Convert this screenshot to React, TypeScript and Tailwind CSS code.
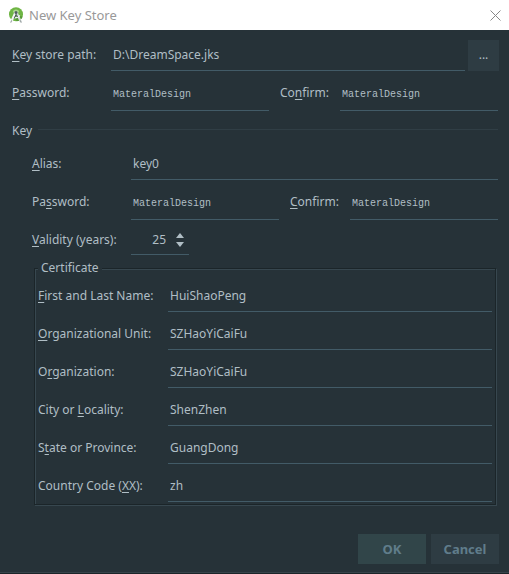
import type { InputHTMLAttributes, ReactNode } from "react";

const fieldBase =
  "h-8 min-w-0 flex-1 rounded-none border-0 border-b border-[#425b67] bg-transparent p-0 pl-[2px] text-[#b0bec5] outline-none";

function Mnemonic({ children }: { children: ReactNode }) {
  return <span className="underline decoration-1 underline-offset-2">{children}</span>;
}

function TextField(props: InputHTMLAttributes<HTMLInputElement>) {
  return <input type="text" className={fieldBase} {...props} />;
}

function SecretField(props: InputHTMLAttributes<HTMLInputElement>) {
  return (
    <input
      type="text"
      className="h-9 min-w-0 flex-1 rounded-none border-0 border-b border-[#425b67] bg-transparent p-0 pt-[3px] pl-[2px] font-['Liberation_Mono',monospace] text-[10px] text-[#b0bec5] outline-none"
      {...props}
    />
  );
}

function Label({ id, className, children }: { id: string; className: string; children: ReactNode }) {
  return (
    <label htmlFor={id} className={`shrink-0 whitespace-nowrap ${className}`}>
      {children}
    </label>
  );
}

const certificate = [
  { id: "name", before: "", key: "F", after: "irst and Last Name:", value: "HuiShaoPeng" },
  { id: "unit", before: "", key: "O", after: "rganizational Unit:", value: "SZHaoYiCaiFu" },
  { id: "org", before: "O", key: "r", after: "ganization:", value: "SZHaoYiCaiFu" },
  { id: "city", before: "City or ", key: "L", after: "ocality:", value: "ShenZhen" },
  { id: "state", before: "S", key: "t", after: "ate or Province:", value: "GuangDong" },
  { id: "country", before: "Country Code (", key: "X", after: "X):", value: "zh" },
];

function AppIcon() {
  return (
    <svg viewBox="0 0 16 16" className="size-4" aria-hidden="true">
      <circle cx="8" cy="7.3" r="7" fill="#6fb544" />
      <path d="M8 7.3 14.6 9.8A7 7 0 0 1 9 14.2L6 11z" fill="#559a35" />
      <path d="M4.8 5.6a3.2 3.2 0 0 1 6.4 0z" fill="#a9d68a" />
      <path d="M7.2 6 3.4 14.4" stroke="#f4f6f5" strokeWidth="2.2" strokeLinecap="round" />
      <path d="M8.8 6l3.8 8.4" stroke="#d5dcd9" strokeWidth="2.2" strokeLinecap="round" />
      <path d="M5 9.6Q8 12.2 11.8 8.6" stroke="#f1f3f2" strokeWidth="1.4" fill="none" />
      <circle cx="8" cy="5.6" r="1.5" fill="#4f5b5e" />
      <path d="M8 7.4 6.2 11.4M8.2 7.4l1.4 2.6" stroke="#4f5b5e" strokeWidth="1" />
      <path d="m3.6 13.4-.8 2.2M12.4 13.4l.8 2.2" stroke="#8c9496" strokeWidth="1" />
    </svg>
  );
}

export default function App() {
  return (
    <div className="flex min-h-screen flex-col border-b border-[#1b2529] bg-[#263238] font-['Noto_Sans',sans-serif] text-[12px] leading-5 text-[#b0bec5]">
      <header className="flex h-[30px] items-center bg-white pr-2 pl-2 text-[#999999]">
        <AppIcon />
        <h1 className="ml-[5px] flex-1 text-[13px]">New Key Store</h1>
        <button type="button" aria-label="Close" className="grid size-[11px] place-items-center">
          <svg viewBox="0 0 11 11" className="size-[11px]" fill="none" stroke="#888888">
            <path d="M.5.5l10 10M10.5.5l-10 10" />
          </svg>
        </button>
      </header>

      <main className="flex flex-1 flex-col border-b border-[#37434a] pt-[9px] pr-[11px]">
        <div className="-mr-px flex items-center pl-3">
          <Label id="path" className="w-[99px]">
            <Mnemonic>K</Mnemonic>ey store path:
          </Label>
          <TextField id="path" defaultValue="D:\DreamSpace.jks" />
          <button type="button" aria-label="Browse" className="ml-[3px] h-[31px] w-[31px] bg-[#2e3c43]">
            ...
          </button>
        </div>

        <div className="mt-1 flex items-center pl-3">
          <Label id="store-password" className="w-[99px]">
            <Mnemonic>P</Mnemonic>assword:
          </Label>
          <SecretField id="store-password" defaultValue="MateralDesign" />
          <Label id="store-confirm" className="ml-[11px] w-[60px]">
            Co<Mnemonic>n</Mnemonic>firm:
          </Label>
          <SecretField id="store-confirm" defaultValue="MateralDesign" />
        </div>

        <section>
          <div className="mt-[10px] flex items-center gap-[6px] pl-3">
            <h2>Key</h2>
            <div className="mb-1 h-px flex-1 bg-[#303e45]" />
          </div>

          <div className="mt-[7px] flex items-center pl-8">
            <Label id="alias" className="w-[99px]">
              <Mnemonic>A</Mnemonic>lias:
            </Label>
            <TextField id="alias" defaultValue="key0" />
          </div>

          <div className="mt-1 flex items-center pl-8">
            <Label id="key-password" className="w-[99px]">
              Pa<Mnemonic>s</Mnemonic>sword:
            </Label>
            <SecretField id="key-password" defaultValue="MateralDesign" />
            <Label id="key-confirm" className="ml-[11px] w-[60px]">
              <Mnemonic>C</Mnemonic>onfirm:
            </Label>
            <SecretField id="key-confirm" defaultValue="MateralDesign" />
          </div>

          <div className="mt-[5px] flex items-center pl-8">
            <Label id="validity" className="w-[99px]">
              <Mnemonic>V</Mnemonic>alidity (years):
            </Label>
            <div className="flex h-[30px] w-[58px] items-center border-b border-[#425b67]">
              <input
                id="validity"
                type="text"
                inputMode="numeric"
                defaultValue="25"
                className="w-[35px] min-w-0 bg-transparent p-0 text-right outline-none"
              />
              <div className="ml-[10px] flex flex-col gap-1">
                <button type="button" aria-label="Increase">
                  <svg viewBox="0 0 8 5" className="h-[5px] w-2" fill="#b0bec5">
                    <path d="M4 0l4 5H0z" />
                  </svg>
                </button>
                <button type="button" aria-label="Decrease">
                  <svg viewBox="0 0 8 5" className="h-[5px] w-2" fill="#b0bec5">
                    <path d="M0 0h8L4 5z" />
                  </svg>
                </button>
              </div>
            </div>
          </div>

          <fieldset className="mt-[3px] mr-[2px] ml-[34px] border border-[#1b2529] pt-[2px] pr-[3px] pb-[2px] pl-[3px] shadow-[inset_1px_1px_0_#37474f,1px_1px_0_#37474f]">
            <legend className="bg-[#263238] px-[3px]">Certificate</legend>
            <div className="flex flex-col gap-[6px]">
              {certificate.map((row) => (
                <div key={row.id} className="flex items-center">
                  <Label id={row.id} className="w-[130px]">
                    {row.before}
                    <Mnemonic>{row.key}</Mnemonic>
                    {row.after}
                  </Label>
                  <TextField id={row.id} defaultValue={row.value} />
                </div>
              ))}
            </div>
          </fieldset>
        </section>

        <footer className="mt-auto -mr-px flex justify-end gap-[5px] pb-2 text-[13px] font-bold text-[#607d8b]">
          <button type="button" className="h-[30px] w-[68px] bg-[#314549]">
            OK
          </button>
          <button type="button" className="h-[30px] w-[68px] bg-[#2e3c43]">
            Cancel
          </button>
        </footer>
      </main>
    </div>
  );
}
